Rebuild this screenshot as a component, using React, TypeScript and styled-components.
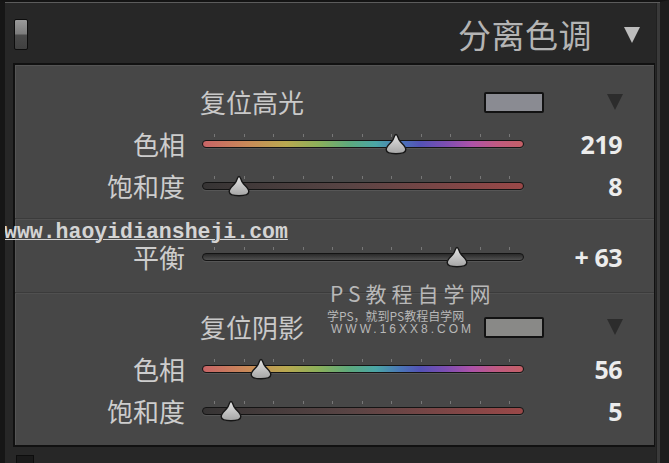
import React from 'react';
import styled, { createGlobalStyle } from 'styled-components';

const GlobalStyle = createGlobalStyle`
  html, body {
    margin: 0;
    padding: 0;
    background: #232323;
  }
  body {
    font-family: "Noto Sans CJK SC", "Noto Sans", sans-serif;
  }
`;

const Frame = styled.div`
  position: relative;
  width: 669px;
  height: 463px;
  box-sizing: border-box;
  background: #272727;
  border-top: 2px solid #141414;
  border-left: 5px solid #161616;
  border-right: 9px solid #1d1d1d;
  box-shadow: inset 0 1px 0 #5c5c5c, inset -3px 0 0 #3a3a3a, inset -4px 0 0 #202020;
  overflow: hidden;
`;

const Header = styled.div`
  display: flex;
  align-items: center;
  height: 61px;
  padding: 0 20px 0 9px;
`;

const Toggle = styled.div`
  width: 12px;
  height: 29px;
  margin-top: 3px;
  border: 1px solid #0d0d0d;
  border-radius: 2px;
  background: linear-gradient(#9a9a9a 0%, #7c7c7c 48%, #4a4a4a 52%, #404040 100%);
`;

const Title = styled.div`
  margin-left: auto;
  margin-top: 3px;
  font-size: 33px;
  line-height: 1;
  color: #b4b4b4;
  letter-spacing: 0.5px;
`;

const Arrow = styled.div<{ $dark?: boolean; $size: number }>`
  width: 0;
  height: 0;
  border-left: ${p => p.$size / 2}px solid transparent;
  border-right: ${p => p.$size / 2}px solid transparent;
  border-top: ${p => p.$size}px solid ${p => (p.$dark ? '#2c2c2c' : '#bdbdbd')};
`;

const HeaderArrow = styled.div`
  margin-left: 32px;
  margin-top: 4px;
`;

const Panel = styled.div`
  margin-left: 8px;
  width: 642px;
  height: 384px;
  box-sizing: border-box;
  background: #474747;
  border: 2px solid #111;
  border-right-width: 1px;
  box-shadow: inset 1px 1px 0 #555;
  display: flex;
  flex-direction: column;
`;

const Section = styled.div<{ $top: number; $bottom: number; $divider?: boolean }>`
  padding: ${p => p.$top}px 0 ${p => p.$bottom}px;
  border-top: ${p => (p.$divider ? '1px solid #3b3b3b' : 'none')};
  box-shadow: ${p => (p.$divider ? 'inset 0 1px 0 #505050' : 'none')};
`;

const SectionHead = styled.div`
  display: flex;
  align-items: center;
  height: 42px;
  padding: 0 31px 0 185px;
`;

const HeadTitle = styled.div`
  font-size: 26px;
  line-height: 1;
  color: #c9c9c9;
`;

const Swatch = styled.div<{ $color: string }>`
  margin-left: auto;
  width: 56px;
  height: 17px;
  border: 2px solid #121212;
  border-radius: 2px;
  background: ${p => p.$color};
`;

const SwatchArrow = styled.div`
  margin-left: 63px;
`;

const Row = styled.div`
  display: grid;
  grid-template-columns: 170px 322px 81px;
  column-gap: 17px;
  align-items: center;
  height: 42px;
`;

const Label = styled.div`
  text-align: right;
  font-size: 26px;
  line-height: 1;
  color: #cdcdcd;
`;

const Value = styled.div`
  justify-self: end;
  font-family: "Open Sans", "Noto Sans", sans-serif;
  font-weight: 700;
  font-size: 25px;
  line-height: 1;
  color: #ececec;
  letter-spacing: -0.5px;
  white-space: pre;
`;

const SliderArea = styled.div`
  position: relative;
  height: 22px;
`;

const Track = styled.div<{ $fill: string }>`
  position: absolute;
  left: 0;
  right: 0;
  top: 7px;
  height: 8px;
  box-sizing: border-box;
  border: 1.5px solid #141414;
  border-radius: 4px;
  background: ${p => p.$fill};
  box-shadow: 0 1px 0 #565656;
`;

const Ticks = styled.div`
  position: absolute;
  left: 12px;
  right: 14px;
  top: 1px;
  display: flex;
  justify-content: space-between;
`;

const Tick = styled.span`
  width: 1px;
  height: 3px;
  background: #777;
`;

const Thumb = styled.svg`
  position: absolute;
  top: 0;
  width: 22px;
  height: 22px;
  margin-left: -11px;
`;

const Watermark = styled.div`
  position: absolute;
  left: -1px;
  top: 219px;
  font-family: "Liberation Mono", "DejaVu Sans Mono", monospace;
  font-weight: 700;
  font-size: 21.5px;
  line-height: 22px;
  color: #d4d4d4;
  text-decoration: underline;
  text-underline-offset: 1px;
  text-decoration-thickness: 1px;
`;

const Stamp = styled.div`
  position: absolute;
  left: 322px;
  top: 279px;
  display: flex;
  flex-direction: column;
  color: #b8b8b8;
`;

const StampTitle = styled.div`
  font-size: 21px;
  line-height: 24px;
  letter-spacing: 5px;
  margin-left: 3px;
`;

const StampSub = styled.div`
  font-size: 12px;
  line-height: 13px;
  margin-top: 4px;
`;

const StampUrl = styled.div`
  font-family: "Liberation Sans", sans-serif;
  font-size: 12px;
  line-height: 14px;
  letter-spacing: 3px;
  margin-left: 4px;
`;

const BottomToggle = styled.div`
  margin: 8px 0 0 11px;
  width: 16px;
  height: 10px;
  background: #1a1a1a;
  border: 1px solid #0d0d0d;
`;

const HUE =
  'linear-gradient(90deg, #c86466 0%, #c98a58 14%, #b9a950 26%, #8cb05a 36%, #5ca97e 46%, #4aa6a6 54%, #4a74b8 62%, #5452b6 68%, #7e4eb2 76%, #ad52a8 84%, #c05a80 92%, #c46066 100%)';
const SAT = 'linear-gradient(90deg, #363434 0%, #584444 45%, #9a4848 100%)';
const BAL = 'linear-gradient(#2a2a2a, #505050)';

type SliderRow = { label: string; value: string; pos: number; fill: string };

const highlight: SliderRow[] = [
  { label: '色相', value: '219', pos: 194, fill: HUE },
  { label: '饱和度', value: '8', pos: 37, fill: SAT },
];

const shadow: SliderRow[] = [
  { label: '色相', value: '56', pos: 59, fill: HUE },
  { label: '饱和度', value: '5', pos: 29, fill: SAT },
];

const ThumbIcon: React.FC<{ left: number }> = ({ left }) => (
  <Thumb viewBox="0 0 22 22" style={{ left }}>
    <defs>
      <linearGradient id="thumbGrad" x1="0" y1="0" x2="0" y2="1">
        <stop offset="0" stopColor="#e4e4e4" />
        <stop offset="1" stopColor="#a4a4a4" />
      </linearGradient>
    </defs>
    <path
      d="M11 1.5C12.6 1.5 12.8 5 14.6 7.6C17 11 20.8 13 20.8 16.6C20.8 19.8 17.5 20.8 11 20.8C4.5 20.8 1.2 19.8 1.2 16.6C1.2 13 5 11 7.4 7.6C9.2 5 9.4 1.5 11 1.5Z"
      fill="url(#thumbGrad)"
      stroke="#161616"
      strokeWidth="1.4"
    />
  </Thumb>
);

const Slider: React.FC<{ row: SliderRow }> = ({ row }) => (
  <Row>
    <Label>{row.label}</Label>
    <SliderArea>
      <Ticks>
        {Array.from({ length: 11 }).map((_, i) => (
          <Tick key={i} />
        ))}
      </Ticks>
      <Track $fill={row.fill} />
      <ThumbIcon left={row.pos} />
    </SliderArea>
    <Value>{row.value}</Value>
  </Row>
);

const App: React.FC = () => (
  <>
    <GlobalStyle />
    <Frame>
      <Header>
        <Toggle />
        <Title>分离色调</Title>
        <HeaderArrow>
          <Arrow $size={16} />
        </HeaderArrow>
      </Header>

      <Panel>
        <Section $top={16} $bottom={11}>
          <SectionHead>
            <HeadTitle>复位高光</HeadTitle>
            <Swatch $color="#8a8b92" />
            <SwatchArrow>
              <Arrow $dark $size={16} />
            </SwatchArrow>
          </SectionHead>
          {highlight.map(r => (
            <Slider key={r.label} row={r} />
          ))}
        </Section>

        <Section $top={17} $bottom={14} $divider>
          <Slider row={{ label: '平衡', value: '+ 63', pos: 255, fill: BAL }} />
        </Section>

        <Section $top={13} $bottom={0} $divider>
          <SectionHead>
            <HeadTitle>复位阴影</HeadTitle>
            <Swatch $color="#898987" />
            <SwatchArrow>
              <Arrow $dark $size={16} />
            </SwatchArrow>
          </SectionHead>
          {shadow.map(r => (
            <Slider key={r.label} row={r} />
          ))}
        </Section>
      </Panel>

      <BottomToggle />

      <Watermark>www.haoyidiansheji.com</Watermark>
      <Stamp>
        <StampTitle>PS教程自学网</StampTitle>
        <StampSub>学PS，就到PS教程自学网</StampSub>
        <StampUrl>WWW.16XX8.COM</StampUrl>
      </Stamp>
    </Frame>
  </>
);

export default App;
